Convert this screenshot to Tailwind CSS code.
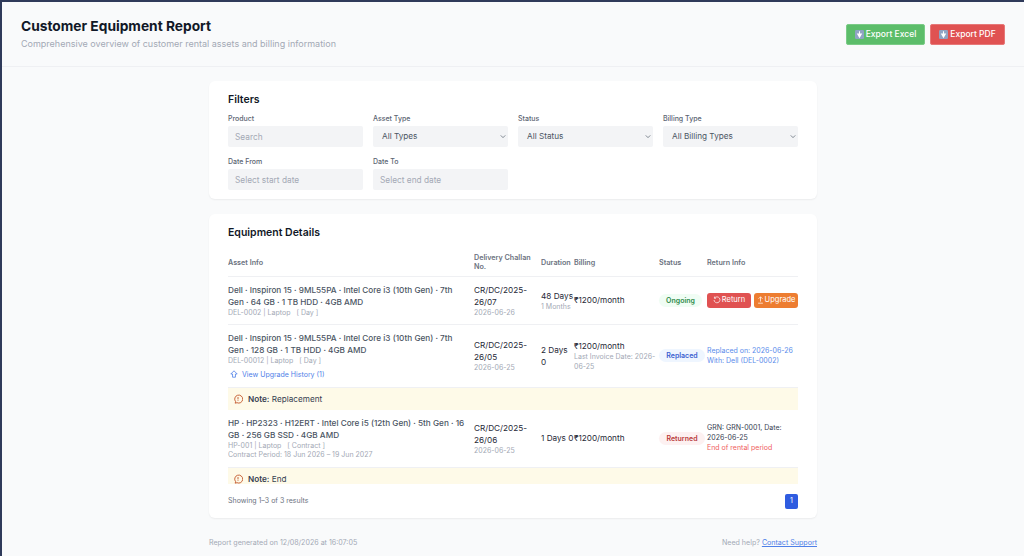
<!DOCTYPE html>
<html lang="en">
<head>
  <meta charset="UTF-8">
  <title>Customer Equipment Report</title>
  <script src="https://cdn.jsdelivr.net/npm/@tailwindcss/browser@4"></script>
</head>
<body class="font-['Inter','Liberation_Sans',sans-serif] bg-[#2f3a5a] h-[556px] overflow-hidden pt-[2px] pl-[2px]">
  <div class="bg-[#f9fafb] h-[554px] overflow-hidden">
    <!-- Header -->
    <header class="h-[65px] border-b border-[#eff0f3] flex justify-between pl-[19px] pr-[19px]">
      <div class="pt-[14px]">
        <h1 class="text-[13.75px] leading-[20px] font-bold text-[#111827]">Customer Equipment Report</h1>
        <p class="text-[9px] leading-[14px] mt-[1px] text-[#a3a9b5]">Comprehensive overview of customer rental assets and billing information</p>
      </div>
      <div class="flex gap-[5px] pt-[22px] items-start">
        <button class="h-[21px] w-[79px] rounded-[2px] bg-[#5cbd6a] border border-[#7bcb87] text-white text-[8.5px] font-medium flex items-center justify-center gap-[2px]">
          <svg class="w-[9px] h-[9px]" viewBox="0 0 10 10"><rect width="10" height="10" rx="1.5" fill="#8fa3c4"/><path d="M5 1.5v4M3 4.5h4L5 8z" stroke="#fff" fill="#fff" stroke-width="1.2"/></svg>
          Export Excel
        </button>
        <button class="h-[21px] w-[75px] rounded-[2px] bg-[#e05252] border border-[#e77878] text-white text-[8.5px] font-medium flex items-center justify-center gap-[2px]">
          <svg class="w-[9px] h-[9px]" viewBox="0 0 10 10"><rect width="10" height="10" rx="1.5" fill="#8fa3c4"/><path d="M5 1.5v4M3 4.5h4L5 8z" stroke="#fff" fill="#fff" stroke-width="1.2"/></svg>
          Export PDF
        </button>
      </div>
    </header>

    <main class="w-[608px] ml-[207px] pt-[14px]">
      <!-- Filters -->
      <section class="bg-white rounded-[6px] shadow-[0_1px_2px_rgba(0,0,0,0.06)] h-[118px] px-[19px] pt-[12px]">
        <h2 class="text-[10.5px] leading-[14px] font-semibold text-[#111827]">Filters</h2>
        <div class="grid grid-cols-[135px_135px_135px_135px] gap-x-[10px] gap-y-[10px] mt-[7px]">
          <div>
            <label class="block text-[7px] leading-[9px] font-medium text-[#5b6472] mb-[3px]">Product</label>
            <input placeholder="Search" class="block w-full h-[21px] rounded-[2px] bg-[#f3f4f6] px-[7px] text-[8.3px] placeholder:text-[#a3a9b5] outline-none">
          </div>
          <div>
            <label class="block text-[7px] leading-[9px] font-medium text-[#5b6472] mb-[3px]">Asset Type</label>
            <div class="relative h-[21px] rounded-[2px] bg-[#f3f4f6] px-[9px] text-[8.2px] leading-[21px] text-[#4b5563]">All Types
              <svg class="absolute right-[2px] top-[8px] w-[6px] h-[5px]" viewBox="0 0 8 5" fill="none" stroke="#5b6472" stroke-width="1"><path d="M1 1l3 3 3-3"/></svg>
            </div>
          </div>
          <div>
            <label class="block text-[7px] leading-[9px] font-medium text-[#5b6472] mb-[3px]">Status</label>
            <div class="relative h-[21px] rounded-[2px] bg-[#f3f4f6] px-[9px] text-[8.2px] leading-[21px] text-[#4b5563]">All Status
              <svg class="absolute right-[2px] top-[8px] w-[6px] h-[5px]" viewBox="0 0 8 5" fill="none" stroke="#5b6472" stroke-width="1"><path d="M1 1l3 3 3-3"/></svg>
            </div>
          </div>
          <div>
            <label class="block text-[7px] leading-[9px] font-medium text-[#5b6472] mb-[3px]">Billing Type</label>
            <div class="relative h-[21px] rounded-[2px] bg-[#f3f4f6] px-[9px] text-[8.2px] leading-[21px] text-[#4b5563]">All Billing Types
              <svg class="absolute right-[2px] top-[8px] w-[6px] h-[5px]" viewBox="0 0 8 5" fill="none" stroke="#5b6472" stroke-width="1"><path d="M1 1l3 3 3-3"/></svg>
            </div>
          </div>
          <div>
            <label class="block text-[7px] leading-[9px] font-medium text-[#5b6472] mb-[3px]">Date From</label>
            <input placeholder="Select start date" class="block w-full h-[21px] rounded-[2px] bg-[#f3f4f6] px-[7px] text-[8.3px] placeholder:text-[#a3a9b5] outline-none">
          </div>
          <div>
            <label class="block text-[7px] leading-[9px] font-medium text-[#5b6472] mb-[3px]">Date To</label>
            <input placeholder="Select end date" class="block w-full h-[21px] rounded-[2px] bg-[#f3f4f6] px-[7px] text-[8.3px] placeholder:text-[#a3a9b5] outline-none">
          </div>
        </div>
      </section>

      <!-- Equipment details -->
      <section class="bg-white rounded-[6px] shadow-[0_1px_2px_rgba(0,0,0,0.06)] h-[304px] mt-[15px] px-[19px] pt-[12px]">
        <h2 class="text-[10.5px] leading-[14px] font-semibold text-[#111827]">Equipment Details</h2>
        <div class="h-[234px] mt-[10px] overflow-hidden">
          <table class="table-fixed w-[570px] text-[8.2px] text-[#1f2937]">
            <colgroup><col class="w-[246px]"><col class="w-[67px]"><col class="w-[33px]"><col class="w-[85px]"><col class="w-[48px]"><col class="w-[91px]"></colgroup>
            <thead>
              <tr class="h-[26px] border-b border-[#eff0f3] text-[7.2px] leading-[9px] text-[#6b7280] text-left">
                <th class="font-semibold pb-[1px]">Asset Info</th>
                <th class="font-semibold pb-[1px]">Delivery Challan No.</th>
                <th class="font-semibold pb-[1px]">Duration</th>
                <th class="font-semibold pb-[1px]">Billing</th>
                <th class="font-semibold pb-[1px]">Status</th>
                <th class="font-semibold pb-[1px]">Return Info</th>
              </tr>
            </thead>
            <tbody>
              <tr class="h-[48px] border-b border-[#eff0f3] leading-[12px]">
                <td class="align-middle pr-[8px]">
                  <div class="font-medium text-[#4b5563]">Dell · Inspiron 15 · 9ML55PA · Intel Core i3 (10th Gen) · 7th Gen · 64 GB · 1 TB HDD · 4GB AMD</div>
                  <div class="text-[7px] leading-[9px] text-[#a3a9b5]">DEL-0002 | Laptop &nbsp; [ Day ]</div>
                </td>
                <td class="align-middle">CR/DC/2025-26/07<div class="text-[7px] leading-[9px] text-[#a3a9b5]">2026-06-26</div></td>
                <td class="align-middle">48 Days<div class="text-[7px] leading-[9px] text-[#a3a9b5]">1 Months</div></td>
                <td class="align-middle">₹1200/month</td>
                <td class="align-middle"><span class="inline-block w-[43px] text-center rounded-full bg-[#f0fdf4] text-[#2e8b4a] text-[7px] leading-[13px] font-semibold">Ongoing</span></td>
                <td class="align-middle">
                  <div class="flex gap-[3px]">
                    <button class="h-[15px] w-[44px] rounded-[3px] bg-[#e05252] text-white text-[7.5px] flex items-center justify-center gap-[1px]">
                      <svg class="w-[8px] h-[8px]" viewBox="0 0 10 10" fill="none" stroke="#fff" stroke-width="0.9"><path d="M2 2.6A3.7 3.7 0 1 1 1.3 5M1.8 0.8v2h2"/></svg>Return
                    </button>
                    <button class="h-[15px] w-[44px] rounded-[3px] bg-[#ed7d31] text-white text-[7.5px] flex items-center justify-center gap-[1px]">
                      <svg class="w-[7px] h-[8px]" viewBox="0 0 8 10" fill="none" stroke="#fff" stroke-width="0.9"><path d="M4 7V1M1.5 3.5L4 1l2.5 2.5M1 9h6"/></svg>Upgrade
                    </button>
                  </div>
                </td>
              </tr>
              <tr class="h-[63px] border-b border-[#eff0f3] leading-[12px]">
                <td class="align-middle pr-[8px] pb-[1px]">
                  <div class="font-medium text-[#4b5563]">Dell · Inspiron 15 · 9ML55PA · Intel Core i3 (10th Gen) · 7th Gen · 128 GB · 1 TB HDD · 4GB AMD</div>
                  <div class="text-[7px] leading-[9px] text-[#a3a9b5]">DEL-00012 | Laptop &nbsp; [ Day ]</div>
                  <div class="flex items-center gap-[4px] mt-[5px] ml-[2px] text-[7px] leading-[9px] text-[#4f80e8]">
                    <svg class="w-[8px] h-[8px]" viewBox="0 0 10 10" fill="none" stroke="#4f80e8" stroke-width="1"><path d="M5 1L1 5h2.2v4h3.6V5H9z"/></svg>
                    View Upgrade History (1)
                  </div>
                </td>
                <td class="align-middle">CR/DC/2025-26/05<div class="text-[7px] leading-[9px] text-[#a3a9b5]">2026-06-25</div></td>
                <td class="align-middle">2 Days 0</td>
                <td class="align-middle">₹1200/month<div class="text-[7px] leading-[10px] text-[#a3a9b5]">Last Invoice Date: 2026-06-25</div></td>
                <td class="align-middle"><span class="inline-block w-[46px] text-center rounded-full bg-[#eff6ff] text-[#3b5fd0] text-[7px] leading-[13px] font-semibold">Replaced</span></td>
                <td class="align-middle text-[7px] leading-[10px] text-[#5a8ceb]">Replaced on: 2026-06-26<br>With: Dell (DEL-0002)</td>
              </tr>
              <tr class="h-[23px] bg-[#fefae8]">
                <td colspan="6" class="pl-[5px] text-[8.2px] text-[#374151]">
                  <div class="flex items-center gap-[5px] pt-[1px]">
                    <svg class="w-[10px] h-[10px]" viewBox="0 0 10 10" fill="none" stroke="#c2562a" stroke-width="0.9"><path d="M2.2 9.2l.4-1.6A4 4 0 1 1 4 8.7z"/><path d="M5 3v2.4M5 6.3v.7"/></svg>
                    <span><b class="font-semibold">Note:</b> Replacement</span>
                  </div>
                </td>
              </tr>
              <tr class="h-[57px] border-b border-[#eff0f3] leading-[12px]">
                <td class="align-middle pr-[1px]">
                  <div class="font-medium text-[#4b5563]">HP · HP2323 · H12ERT · Intel Core i5 (12th Gen) · 5th Gen · 16 GB · 256 GB SSD · 4GB AMD</div>
                  <div class="text-[7px] leading-[9px] text-[#a3a9b5]">HP-001 | Laptop &nbsp; [ Contract ]</div>
                  <div class="text-[7px] leading-[9px] text-[#a3a9b5]">Contract Period: 18 Jun 2026 – 19 Jun 2027</div>
                </td>
                <td class="align-middle">CR/DC/2025-26/06<div class="text-[7px] leading-[9px] text-[#a3a9b5]">2026-06-25</div></td>
                <td class="align-middle">1 Days 0</td>
                <td class="align-middle">₹1200/month</td>
                <td class="align-middle"><span class="inline-block w-[46px] text-center rounded-full bg-[#fdf1f1] text-[#b93a3a] text-[7px] leading-[13px] font-semibold">Returned</span></td>
                <td class="align-middle text-[7px] leading-[10px] text-[#374151]">GRN: GRN-0001, Date: 2026-06-25<div class="text-[#ef6060]">End of rental period</div></td>
              </tr>
              <tr class="h-[23px] bg-[#fefae8]">
                <td colspan="6" class="pl-[5px] text-[8.2px] text-[#374151]">
                  <div class="flex items-center gap-[5px] pt-[1px]">
                    <svg class="w-[10px] h-[10px]" viewBox="0 0 10 10" fill="none" stroke="#c2562a" stroke-width="0.9"><path d="M2.2 9.2l.4-1.6A4 4 0 1 1 4 8.7z"/><path d="M5 3v2.4M5 6.3v.7"/></svg>
                    <span><b class="font-semibold">Note:</b> End</span>
                  </div>
                </td>
              </tr>
            </tbody>
          </table>
        </div>
        <div class="flex justify-between items-center mt-[10px]">
          <span class="text-[7px] text-[#6b7280]">Showing 1–3 of 3 results</span>
          <span class="w-[13px] h-[15px] rounded-[2px] bg-[#2f5ce0] text-white text-[7px] flex items-center justify-center">1</span>
        </div>
      </section>

      <!-- Footer -->
      <footer class="flex justify-between mt-[20px] text-[7.1px] leading-[9px] text-[#a3a9b5]">
        <span>Report generated on 12/08/2026 at 16:07:05</span>
        <span>Need help? <a class="text-[#4f80e8] underline">Contact Support</a></span>
      </footer>
    </main>
  </div>
</body>
</html>
